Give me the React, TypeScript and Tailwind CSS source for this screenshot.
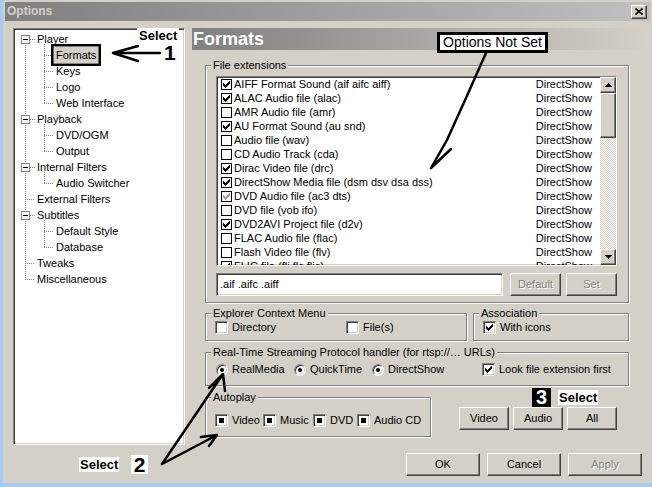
import type { ReactNode } from 'react'

const sunken =
  'border border-t-[#808080] border-l-[#808080] border-r-white border-b-white shadow-[inset_1px_1px_0_#404040,inset_-1px_-1px_0_#d4d0c8]'
const raised =
  'border border-t-white border-l-white border-r-[#404040] border-b-[#404040] shadow-[inset_-1px_-1px_0_#808080]'

const files: [string, number][] = [
  ['AIFF Format Sound (aif aifc aiff)', 1],
  ['ALAC Audio file (alac)', 1],
  ['AMR Audio file (amr)', 0],
  ['AU Format Sound (au snd)', 1],
  ['Audio file (wav)', 0],
  ['CD Audio Track (cda)', 0],
  ['Dirac Video file (drc)', 1],
  ['DirectShow Media file (dsm dsv dsa dss)', 1],
  ['DVD Audio file (ac3 dts)', 2],
  ['DVD file (vob ifo)', 0],
  ['DVD2AVI Project file (d2v)', 1],
  ['FLAC Audio file (flac)', 0],
  ['Flash Video file (flv)', 0],
  ['FLIC file (fli flc flic)', 1],
]

const tree: { label: string; level: number; open?: boolean }[] = [
  { label: 'Player', level: 0, open: true },
  { label: 'Formats', level: 1 },
  { label: 'Keys', level: 1 },
  { label: 'Logo', level: 1 },
  { label: 'Web Interface', level: 1 },
  { label: 'Playback', level: 0, open: true },
  { label: 'DVD/OGM', level: 1 },
  { label: 'Output', level: 1 },
  { label: 'Internal Filters', level: 0, open: true },
  { label: 'Audio Switcher', level: 1 },
  { label: 'External Filters', level: 0 },
  { label: 'Subtitles', level: 0, open: true },
  { label: 'Default Style', level: 1 },
  { label: 'Database', level: 1 },
  { label: 'Tweaks', level: 0 },
  { label: 'Miscellaneous', level: 0 },
]

// child groups: [parent row, last child row]
const branches: [number, number][] = [
  [0, 4],
  [5, 7],
  [8, 9],
  [11, 13],
]

function Mark({ color = '#000' }: { color?: string }) {
  return (
    <svg width="7" height="7" viewBox="0 0 7 7" shapeRendering="crispEdges">
      <path fill={color} d="M0 2h1v3H0zM1 3h1v3H1zM2 4h1v3H2zM3 3h1v3H3zM4 2h1v3H4zM5 1h1v3H5zM6 0h1v3H6z" />
    </svg>
  )
}

function Check3({ checked, dot }: { checked?: boolean; dot?: boolean }) {
  return (
    <span className={`flex h-[13px] w-[13px] shrink-0 items-center justify-center bg-white ${sunken}`}>
      {checked && <Mark />}
      {dot && <span className="h-[5px] w-[5px] bg-black" />}
    </span>
  )
}

function Radio() {
  return (
    <span className={`flex h-[12px] w-[12px] shrink-0 items-center justify-center rounded-full bg-white ${sunken}`}>
      <span className="h-[4px] w-[4px] rounded-full bg-black" />
    </span>
  )
}

function Btn({ children, className = '', disabled }: { children?: ReactNode; className?: string; disabled?: boolean }) {
  return (
    <div
      className={`flex shrink-0 items-center justify-center bg-[#d4d0c8] ${raised} ${
        disabled ? 'text-[#808080] [text-shadow:1px_1px_0_#fff]' : ''
      } ${className}`}
    >
      {children}
    </div>
  )
}

function Group({ label, className = '', children }: { label: string; className?: string; children?: ReactNode }) {
  return (
    <div className={`border border-[#808080] shadow-[inset_1px_1px_0_#fff,1px_1px_0_#fff] ${className}`}>
      <div className="-mt-[7px] ml-[5px] w-fit bg-[#d4d0c8] px-[2px] leading-[13px]">{label}</div>
      {children}
    </div>
  )
}

function Arrow({ down }: { down?: boolean }) {
  return (
    <svg width="7" height="4" viewBox="0 0 7 4" shapeRendering="crispEdges">
      <path
        fill="#000"
        d={down ? 'M0 0h7v1H6v1H5v1H4v1H3V3H2V2H1V1H0z' : 'M3 0h1v1h1v1h1v1h1v1H0V3h1V2h1V1h1z'}
      />
    </svg>
  )
}

function Tree() {
  const cy = (i: number) => 10 + 16 * i
  return (
    <div className={`relative h-[417px] w-[172px] shrink-0 bg-white pt-[2px] ${sunken}`}>
      <svg className="absolute left-0 top-0" width="170" height="300">
        <g stroke="#808080" strokeWidth="1" strokeDasharray="1 1" fill="none">
          <path d={`M11.5 ${cy(0)}V${cy(15) + 1}`} />
          {branches.map(([p, l]) => (
            <path key={p} d={`M30.5 ${cy(p) + 5}V${cy(l) + 1}`} />
          ))}
          {tree.map((t, i) =>
            t.level === 1 ? (
              <path key={i} d={`M30 ${cy(i) + 0.5}H39`} />
            ) : (
              <path key={i} d={`M${t.open ? 16 : 11} ${cy(i) + 0.5}H21`} />
            ),
          )}
        </g>
        {tree.map((t, i) =>
          t.open ? (
            <g key={i}>
              <rect x="7.5" y={cy(i) - 3.5} width="8" height="8" fill="#fff" stroke="#808080" />
              <path d={`M9 ${cy(i) + 0.5}H14`} stroke="#000" />
            </g>
          ) : null,
        )}
      </svg>
      {tree.map((t) =>
        t.label === 'Formats' ? (
          <div key={t.label} className="flex h-[16px] items-center pl-[39px]">
            <span className="h-[16px] w-[46px] bg-[#d4d0c8] px-[3px] leading-[16px]">Formats</span>
          </div>
        ) : (
          <div
            key={t.label}
            className={`flex h-[16px] items-center whitespace-nowrap ${t.level ? 'pl-[42px]' : 'pl-[23px]'}`}
          >
            {t.label}
          </div>
        ),
      )}
    </div>
  )
}

function FileList() {
  return (
    <div className={`ml-[10px] mt-[4px] flex h-[190px] w-[401px] overflow-hidden bg-white ${sunken}`}>
      <div className="min-w-0 flex-1 overflow-hidden">
        {files.map(([name, st]) => (
          <div key={name} className="flex h-[14px] items-center whitespace-nowrap pl-[4px] pr-[8px]">
            <span className="flex h-[11px] w-[11px] shrink-0 items-center justify-center border border-black bg-white">
              {st ? <Mark color={st === 2 ? '#a0a0a0' : '#000'} /> : null}
            </span>
            <span className="ml-[2px] flex-1">{name}</span>
            <span>DirectShow</span>
          </div>
        ))}
      </div>
      <div className="flex w-[16px] shrink-0 flex-col bg-[repeating-conic-gradient(#d4d0c8_0_25%,#ffffff_0_50%)] bg-[length:2px_2px]">
        <Btn className="h-[16px] w-[16px]">
          <Arrow />
        </Btn>
        <Btn className="h-[45px] w-[16px]" />
        <div className="flex-1" />
        <Btn className="h-[16px] w-[16px]">
          <Arrow down />
        </Btn>
      </div>
    </div>
  )
}

export default function App() {
  return (
    <div className="relative h-[487px] w-[652px] overflow-hidden bg-[#a6caf0] font-['Liberation_Sans',Arial,sans-serif] text-[11px] leading-[13px] text-black">
      <div className="ml-[3px] h-[483px] bg-[#d4d0c8] p-[2px]">
        {/* title bar */}
        <div className="flex h-[19px] items-center justify-between bg-gradient-to-r from-[#808080] to-[#c0c0c0] pl-[2px] pr-[3px]">
          <span className="text-[12px] font-bold text-[#d4d0c8]">Options</span>
          <Btn className="h-[14px] w-[16px]">
            <svg width="8" height="7" viewBox="0 0 8 7">
              <path d="M0.5 0.5L7.5 6.5M7.5 0.5L0.5 6.5" stroke="#000" strokeWidth="1.6" />
            </svg>
          </Btn>
        </div>

        <div className="flex gap-[7px] pl-[8px] pt-[7px]">
          <Tree />

          <div className="flex w-[456px] flex-col">
            <div className="flex h-[22px] items-center bg-gradient-to-r from-[#808080] to-[#d4d0c8] pl-[1px] text-[18px] font-bold text-white">
              Formats
            </div>

            <div className="ml-[13px] mt-[15px] w-[424px]">
              <Group label="File extensions" className="pb-[6px]">
                <FileList />
                <div className="ml-[10px] mt-[7px] flex">
                  <div className={`flex h-[23px] w-[287px] items-center bg-white pl-[3px] ${sunken}`}>.aif .aifc .aiff</div>
                  <Btn disabled className="ml-[7px] h-[23px] w-[51px]">
                    Default
                  </Btn>
                  <Btn disabled className="ml-[5px] h-[23px] w-[51px]">
                    Set
                  </Btn>
                </div>
              </Group>

              <div className="mt-[10px] flex gap-[6px]">
                <Group label="Explorer Context Menu" className="w-[262px] pb-[6px]">
                  <div className="mt-[1px] flex items-center pl-[9px]">
                    <Check3 />
                    <span className="ml-[4px] w-[114px]">Directory</span>
                    <Check3 />
                    <span className="ml-[4px]">File(s)</span>
                  </div>
                </Group>
                <Group label="Association" className="flex-1 pb-[6px]">
                  <div className="mt-[1px] flex items-center pl-[9px]">
                    <Check3 checked />
                    <span className="ml-[4px]">With icons</span>
                  </div>
                </Group>
              </div>

              <Group label="Real-Time Streaming Protocol handler (for rtsp://… URLs)" className="mt-[11px] pb-[9px]">
                <div className="mt-[4px] flex h-[13px] items-center pl-[10px]">
                  <div className="flex w-[78px] items-center">
                    <Radio />
                    <span className="ml-[4px]">RealMedia</span>
                  </div>
                  <div className="flex w-[78px] items-center">
                    <Radio />
                    <span className="ml-[4px]">QuickTime</span>
                  </div>
                  <div className="flex w-[110px] items-center">
                    <Radio />
                    <span className="ml-[4px]">DirectShow</span>
                  </div>
                  <Check3 checked />
                  <span className="ml-[4px]">Look file extension first</span>
                </div>
              </Group>

              <div className="mt-[11px] flex items-start">
                <Group label="Autoplay" className="w-[226px] pb-[9px]">
                  <div className="mt-[10px] flex items-center pl-[9px]">
                    <div className="flex w-[48px] items-center">
                      <Check3 dot />
                      <span className="ml-[4px]">Video</span>
                    </div>
                    <div className="flex w-[50px] items-center">
                      <Check3 dot />
                      <span className="ml-[4px]">Music</span>
                    </div>
                    <div className="flex w-[44px] items-center">
                      <Check3 dot />
                      <span className="ml-[4px]">DVD</span>
                    </div>
                    <div className="flex items-center">
                      <Check3 dot />
                      <span className="ml-[4px]">Audio CD</span>
                    </div>
                  </div>
                </Group>
                <div className="ml-[28px] mt-[10px] flex gap-[4px]">
                  <Btn className="h-[23px] w-[50px]">Video</Btn>
                  <Btn className="h-[23px] w-[50px]">Audio</Btn>
                  <Btn className="h-[23px] w-[50px]">All</Btn>
                </div>
              </div>
            </div>

            <div className="mt-[16px] flex justify-end gap-[7px] pr-[6px]">
              <Btn className="h-[23px] w-[74px]">OK</Btn>
              <Btn className="h-[23px] w-[74px]">Cancel</Btn>
              <Btn disabled className="h-[23px] w-[74px]">
                Apply
              </Btn>
            </div>
          </div>
        </div>
      </div>

      {/* annotations drawn over the dialog */}
      <svg className="pointer-events-none absolute left-0 top-0" width="652" height="487">
        <rect x="52.25" y="45.25" width="47.5" height="19.5" fill="none" stroke="#000" strokeWidth="2.5" />
        <g fill="none" stroke="#000" strokeWidth="2.5" strokeLinecap="round" strokeLinejoin="round">
          <path d="M113 53H160M113 53L138 46M113 53L138 61" />
          <path d="M486 53L466 98L447 140L431 168L451 149" />
          <path d="M162 464L223 374M223 374L209 388M223 374L225 391" />
          <path d="M162 464L217 435M217 435L201 437M217 435L209 446" />
        </g>
      </svg>
      <div className="absolute left-[137px] top-[28px] h-[15px] bg-white px-[2px] text-[13px] font-bold leading-[15px]">Select</div>
      <div className="absolute left-[164px] top-[44px] text-[21px] font-bold leading-[18px]">1</div>
      <div className="absolute left-[437px] top-[32px] flex h-[21px] w-[111px] items-center justify-center border-[3px] border-black bg-white text-[14px]">
        Options Not Set
      </div>
      <div className="absolute left-[79px] top-[457px] h-[15px] bg-white px-[1px] text-[13px] font-bold leading-[15px]">Select</div>
      <div className="absolute left-[131px] top-[455px] flex h-[19px] w-[17px] items-center justify-center bg-white text-[21px] font-bold">
        2
      </div>
      <div className="absolute left-[532px] top-[388px] flex h-[19px] w-[19px] items-center justify-center bg-black text-[20px] font-bold text-white">
        3
      </div>
      <div className="absolute left-[558px] top-[390px] h-[15px] bg-white px-[1px] text-[13px] font-bold leading-[15px]">Select</div>
    </div>
  )
}
